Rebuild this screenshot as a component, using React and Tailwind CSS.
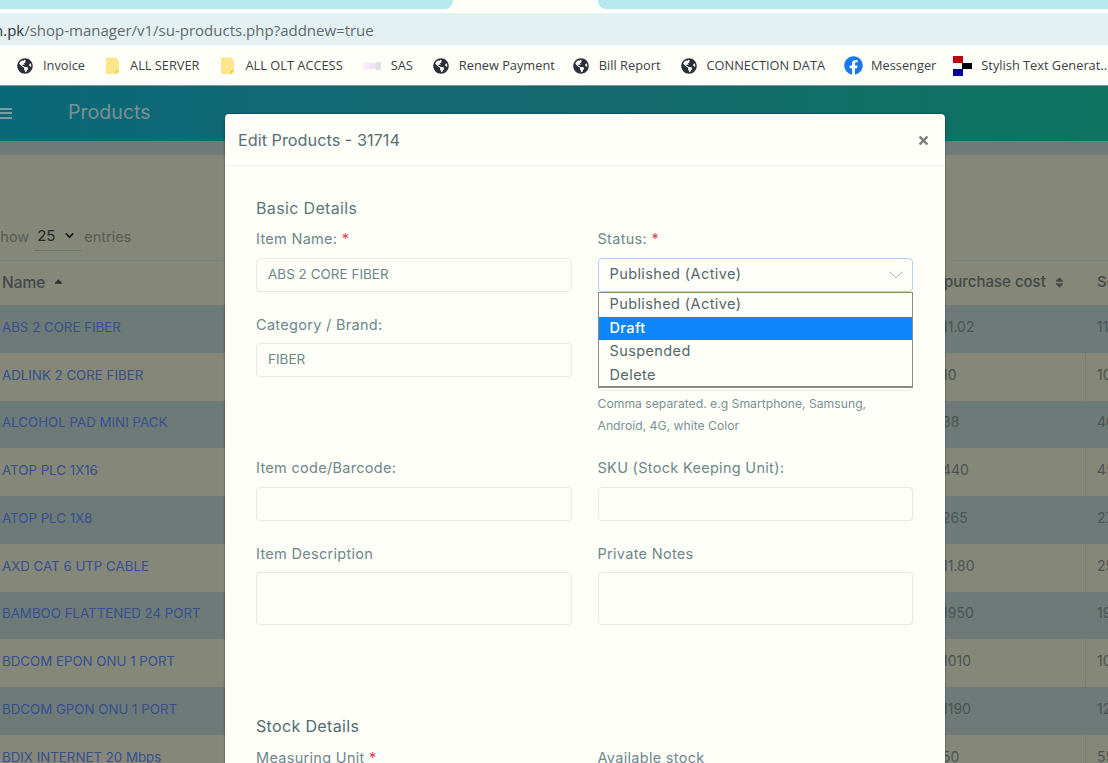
import React from 'react';
import { ChevronDown } from 'lucide-react';
import { FaGlobeAmericas, FaFacebook, FaTimes, FaSort, FaSortUp } from 'react-icons/fa';

const Folder = () => (
    <svg width="15" height="18" viewBox="0 0 14 18">
        <path d="M1.5 0.5h9l3 3v11.5a2 2 0 0 1-2 2h-10a1 1 0 0 1-1-1v-14.5a1 1 0 0 1 1-1z" fill="#fde58c" />
        <path d="M10.5 17v-3h3" fill="none" stroke="#e8c24e" strokeWidth="1" />
    </svg>
);

const SasIcon = () => (
    <svg width="20" height="10" viewBox="0 0 20 10">
        <rect x="0" y="1" width="6" height="8" fill="#f9eefb" />
        <rect x="6" y="2" width="7" height="6" fill="#efe4f3" />
        <rect x="13" y="1" width="5" height="8" fill="#dfdfe5" />
    </svg>
);

const StylishIcon = () => (
    <svg width="20" height="20" viewBox="0 0 20 20">
        <rect x="0" y="0" width="10" height="7" fill="#c00010" />
        <rect x="9" y="7" width="10" height="6" fill="#000" />
        <rect x="0" y="13" width="10" height="7" fill="#00009a" />
    </svg>
);

const globe = <FaGlobeAmericas size={16} color="#2b2f38" />;

const bookmarks = [
    { label: 'Invoice', icon: globe, gap: 'gap-2.5' },
    { label: 'ALL SERVER', icon: <Folder />, gap: 'gap-2.5' },
    { label: 'ALL OLT ACCESS', icon: <Folder />, gap: 'gap-[11px]' },
    { label: 'SAS', icon: <SasIcon />, gap: 'gap-2' },
    { label: 'Renew Payment', icon: globe, gap: 'gap-2.5' },
    { label: 'Bill Report', icon: globe, gap: 'gap-2.5 -ml-[2px]' },
    { label: 'CONNECTION DATA', icon: globe, gap: 'gap-2.5' },
    { label: 'Messenger', icon: <FaFacebook size={19} color="#1778f2" />, gap: 'gap-2 -ml-px' },
    { label: 'Stylish Text Generat...', icon: <StylishIcon />, gap: 'gap-2 -ml-[3px]' },
];

const products = [
    ['ABS 2 CORE FIBER', '11.02', '11.5'],
    ['ADLINK 2 CORE FIBER', '10', '10'],
    ['ALCOHOL PAD MINI PACK', '38', '46'],
    ['ATOP PLC 1X16', '440', '450'],
    ['ATOP PLC 1X8', '265', '270'],
    ['AXD CAT 6 UTP CABLE', '11.80', '25'],
    ['BAMBOO FLATTENED 24 PORT', '1950', '1990'],
    ['BDCOM EPON ONU 1 PORT', '1010', '1050'],
    ['BDCOM GPON ONU 1 PORT', '1190', '1250'],
    ['BDIX INTERNET 20 Mbps', '50', '55'],
];

const statusOptions = ['Published (Active)', 'Draft', 'Suspended', 'Delete'];

const FieldLabel = ({ children, required, tight }) => (
    <label className={`block h-6 text-[14.5px] leading-6 text-[#6f868b] tracking-[0.3px] ${tight ? 'mb-1.5' : 'mb-[7px]'}`}>
        {children}
        {required && <span className="text-[#e0455a]"> *</span>}
    </label>
);

const TextBox = ({ value = '' }) => (
    <input
        readOnly
        value={value}
        className="block w-full h-[34px] px-[11px] pb-[3px] border border-[#e8e9e3] rounded bg-transparent text-[13.5px] text-[#6f868b] outline-none"
    />
);

const NoteBox = () => (
    <textarea readOnly className="block w-full h-[53px] border border-[#e8e9e3] rounded bg-transparent resize-none outline-none" />
);

const StatusSelect = () => (
    <div className="relative">
        <button className="flex items-center justify-between w-full h-[34px] pl-[11px] pr-1 border border-[#b4cdf3] rounded text-[14.5px] text-[#55666a] tracking-[0.4px]">
            <span className="-mt-0.5">Published (Active)</span>
            <ChevronDown size={24} strokeWidth={1} className="text-[#a9adc4]" />
        </button>
        <ul className="absolute z-10 left-0 right-0 top-full h-[96px] border border-b-2 border-[#8c8c84] bg-[#fefff9] text-[14.5px] text-[#55666a] tracking-[0.4px]">
            {statusOptions.map((opt) => (
                <li
                    key={opt}
                    className={`h-[23.5px] pl-[11px] leading-[21px] ${opt === 'Draft' ? 'bg-[#0d85fa] text-white font-medium' : ''}`}
                >
                    {opt}
                </li>
            ))}
        </ul>
    </div>
);

const EditModal = () => (
    <div className="absolute z-20 left-[225px] top-[114px] w-[720px] h-[700px] rounded bg-[#fefff9] shadow-[0_0_2px_rgba(0,0,0,0.6)]">
        {/* Header */}
        <div className="flex items-center justify-between h-[52px] pt-[1px] pl-[13px] pr-[15px] border-b border-[#e9f3f3]">
            <h5 className="text-[16.3px] text-[#5a7077]">Edit Products - 31714</h5>
            <FaTimes size={13} color="#7b7f7c" />
        </div>

        {/* Form */}
        <div className="pt-[30px] pl-[31px] pr-[32px]">
            <h6 className="h-6 mb-[7px] text-[16px] leading-6 text-[#5f767c] tracking-[0.35px]">Basic Details</h6>
            <div className="grid grid-cols-2 gap-x-[26px] gap-y-[21px]">
                <div>
                    <FieldLabel required>Item Name:</FieldLabel>
                    <TextBox value="ABS 2 CORE FIBER" />
                </div>
                <div>
                    <FieldLabel required>Status:</FieldLabel>
                    <StatusSelect />
                </div>
                <div>
                    <FieldLabel tight>Category / Brand:</FieldLabel>
                    <TextBox value="FIBER" />
                </div>
                <div className="pt-11 -mb-0.5">
                    <TextBox />
                    <p className="pt-0.5 text-[12.2px] leading-[22px] text-[#7a9094] w-[290px]">
                        Comma separated. e.g Smartphone, Samsung, Android, 4G, white Color
                    </p>
                </div>
                <div>
                    <FieldLabel>Item code/Barcode:</FieldLabel>
                    <TextBox />
                </div>
                <div>
                    <FieldLabel>SKU (Stock Keeping Unit):</FieldLabel>
                    <TextBox />
                </div>
                <div>
                    <FieldLabel tight>Item Description</FieldLabel>
                    <NoteBox />
                </div>
                <div>
                    <FieldLabel tight>Private Notes</FieldLabel>
                    <NoteBox />
                </div>
            </div>

            <h6 className="h-6 mt-[89px] mb-2 text-[16px] leading-6 text-[#526a71] tracking-[0.35px]">Stock Details</h6>
            <div className="grid grid-cols-2 gap-x-[26px]">
                <FieldLabel required>Measuring Unit</FieldLabel>
                <FieldLabel>Available stock</FieldLabel>
            </div>
        </div>
    </div>
);

const BrowserBar = () => (
    <div className="font-['Open_Sans',sans-serif]">
        {/* Tabs */}
        <div className="flex justify-between h-[13px] bg-[#fffffa]">
            <div className="w-[453px] h-[9px] rounded-br-lg bg-[#b5e9ef]" />
            <div className="w-[510px] h-[9px] rounded-bl-lg bg-[#b5e9ef]" />
        </div>
        {/* Address */}
        <div className="flex items-center h-[32px] pt-[2px] bg-[#e4f1f2] overflow-hidden text-[15px] text-[#5f6b6e]">
            <span className="text-[#2f3638] -ml-[6px]">n.pk</span>/shop-manager/v1/su-products.php?addnew=true
        </div>
        {/* Bookmarks */}
        <div className="flex items-center gap-5 h-[40px] pl-[17px] pt-[1px] bg-[#fffffa] overflow-hidden whitespace-nowrap">
            {bookmarks.map((b) => (
                <div key={b.label} className={`flex items-center shrink-0 text-[12.8px] text-[#3c4043] ${b.gap}`}>
                    {b.icon}
                    <span>{b.label}</span>
                </div>
            ))}
        </div>
    </div>
);

const ProductTable = () => (
    <div>
        <div className="grid grid-cols-[942px_155px_1fr] items-center h-[45px] pb-[1px] border-t border-[#78807a] font-medium text-[#43494a]">
            <div className="flex items-center gap-[7px] pl-[2px] text-[15.5px]">
                Name <FaSortUp size={13} color="#2e3332" className="mt-1" />
            </div>
            <div className="flex items-center gap-[7px] pl-[2px] text-[15px] whitespace-nowrap">
                purchase cost <FaSort size={13} color="#494b4a" />
            </div>
            <div className="text-[15px] whitespace-nowrap">Selling price</div>
        </div>
        {products.map(([name, cost, sale], i) => (
            <div
                key={name}
                className={`grid grid-cols-[942px_144px_1fr] items-center h-[47.75px] ${i % 2 === 0 ? 'bg-[#6e7a78]' : 'bg-[#858779]'}`}
            >
                <div className="pl-[2px] pb-[2px] text-[13.3px] text-[#37508f]">{name}</div>
                <div className={`flex items-center h-full pb-[5px] text-[14px] text-[#4b5452] ${i % 2 === 0 ? '' : 'border-r border-[#787b6e]'}`}>{cost}</div>
                <div className="pl-[11px] pb-[5px] text-[14px] text-[#4b5452]">{sale}</div>
            </div>
        ))}
    </div>
);

export default function App() {
    return (
        <div className="relative w-[1108px] h-[763px] overflow-hidden bg-[#858779] font-['Inter',sans-serif]">
            <BrowserBar />

            {/* App header */}
            <div className="flex items-center h-[56px] pb-[1px] border-t border-[#7d9a9c] bg-gradient-to-r from-[#0b6878] via-[#14696f] to-[#0d7260]">
                <div className="flex flex-col gap-[2.5px] w-3">
                    <span className="h-[2px] bg-[#7d9ca2]" />
                    <span className="h-[2px] bg-[#7d9ca2]" />
                    <span className="h-[2px] bg-[#7d9ca2]" />
                </div>
                <h1 className="ml-14 text-[19.6px] text-[#7a9094]">Products</h1>
            </div>

            <div className="h-[14px] bg-[#6e7a78]" />

            {/* Entries */}
            <div className="flex items-end h-[105px] pb-[9px] text-[14.5px] text-[#575c58]">
                <span className="-ml-[9px] pb-[3px]">Show</span>
                <span className="flex items-center justify-between w-[47px] ml-[5px] pb-[3px] pl-[3px] pr-[5px] border-b border-[#6c7671] text-[15px] text-[#24292b]">
                    25
                    <ChevronDown size={13} strokeWidth={3} color="#15181a" />
                </span>
                <span className="ml-[3px] pb-[3px]">entries</span>
            </div>

            <ProductTable />
            <EditModal />
        </div>
    );
}
